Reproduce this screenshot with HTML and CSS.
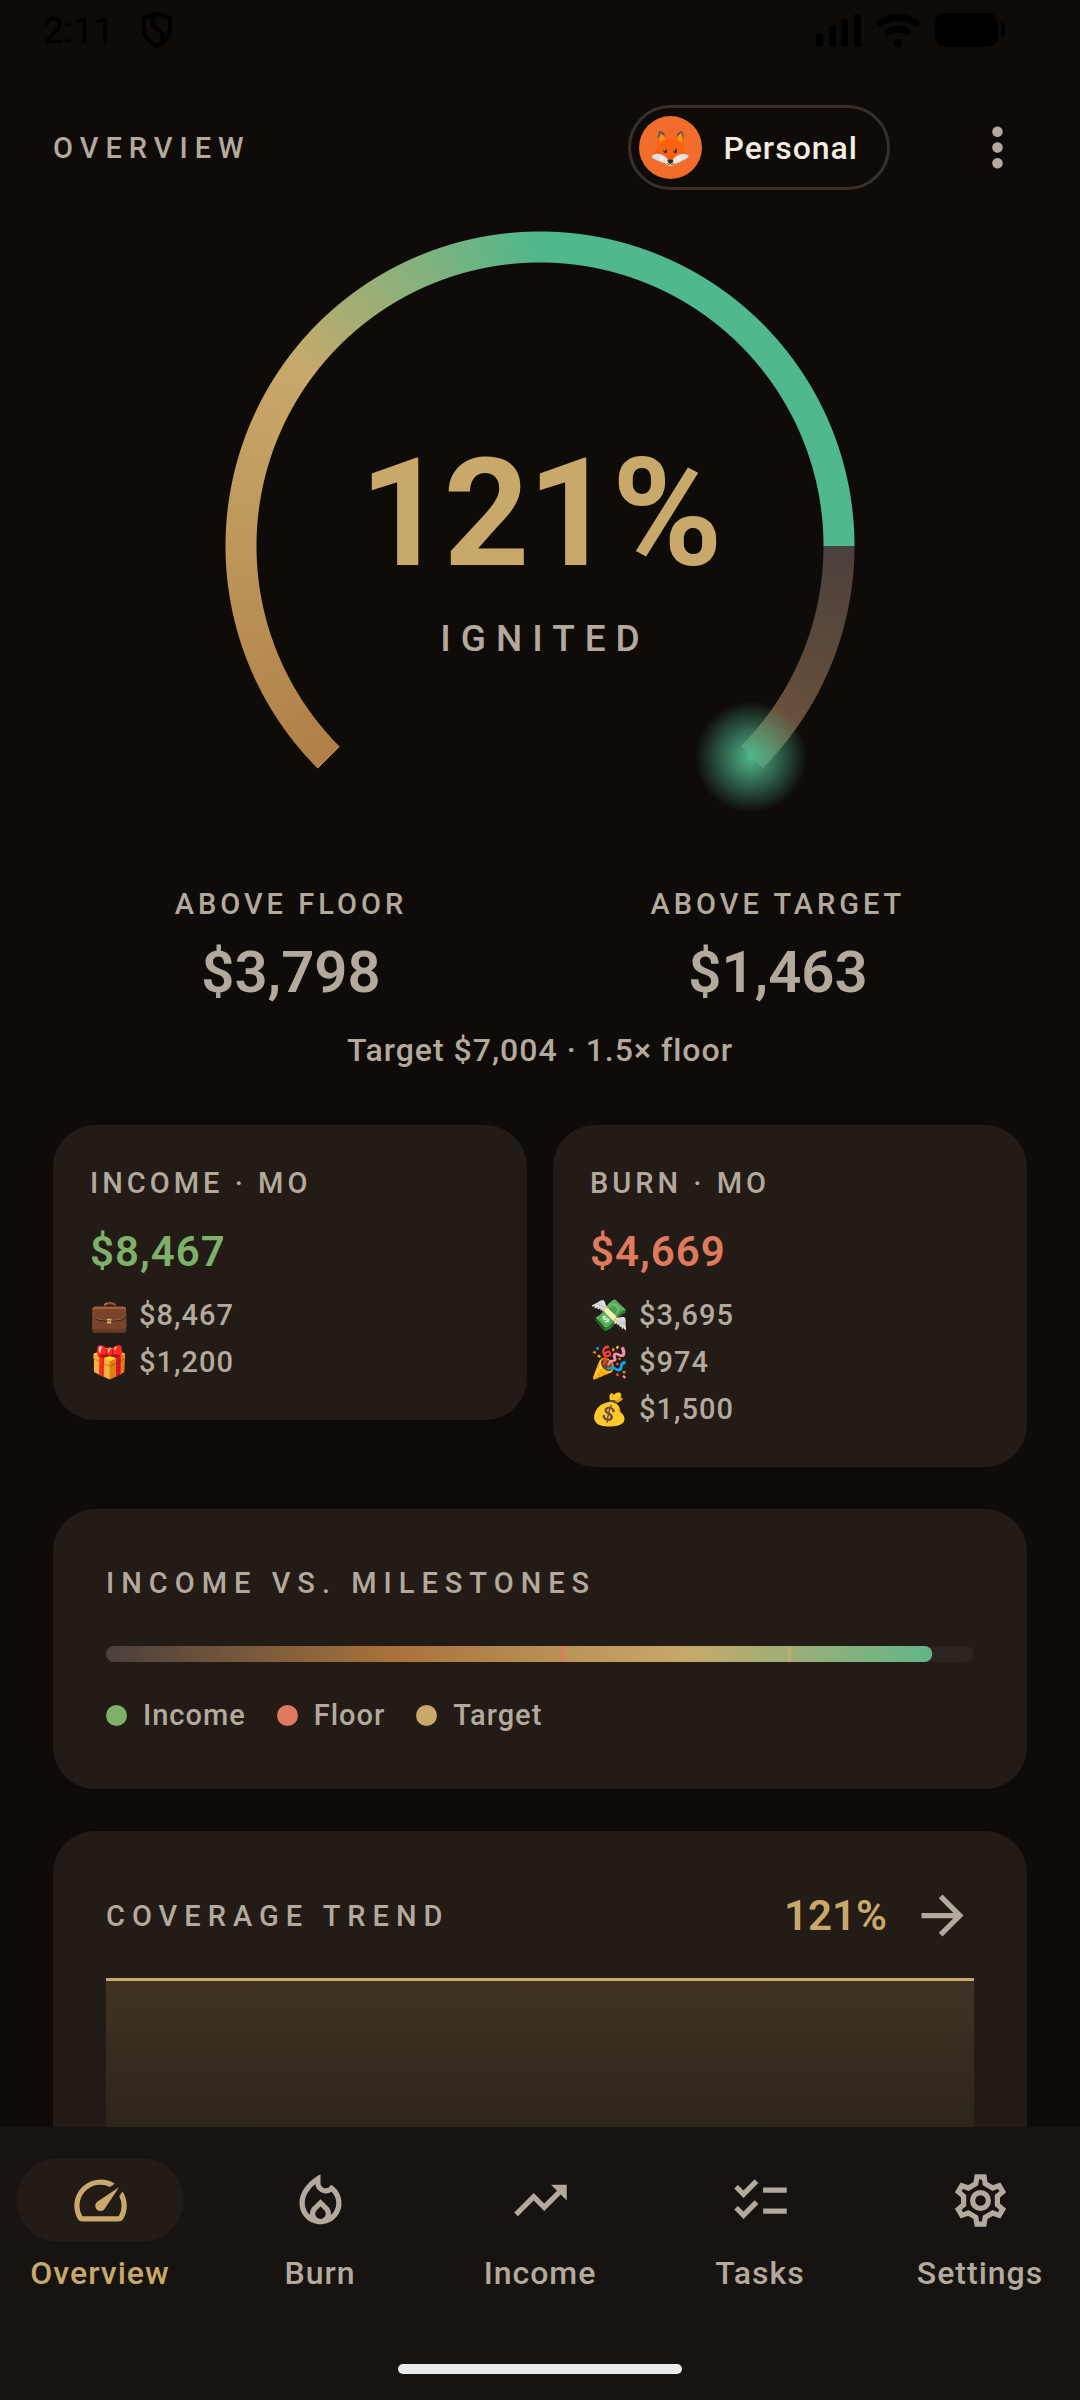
FILE: index.html
```html
<!DOCTYPE html>
<html lang="en">
<head>
	<meta charset="utf-8">
	<meta name="viewport" content="width=device-width, initial-scale=1">
	<title>Overview</title>
	<link rel="stylesheet" href="styles.css">
</head>
<body>

<div class="statusbar">
	<span class="clock">2:11</span>
	<svg class="shield" viewBox="0 0 30 36" fill="none" stroke="#000" stroke-width="4" stroke-linejoin="round">
		<path d="M15 2 L28 6 V17 C28 25 22 31 15 34 C8 31 2 25 2 17 V6 Z"/>
		<path d="M13 3 C9 9 9 14 15 17 C21 20 22 23 20 29"/>
	</svg>
	<svg class="signal" viewBox="0 0 45 34">
		<rect x="0" y="20" width="7" height="14" rx="3"/>
		<rect x="13" y="13" width="7" height="21" rx="3"/>
		<rect x="25" y="6" width="7" height="28" rx="3"/>
		<rect x="38" y="1" width="7" height="33" rx="3"/>
	</svg>
	<svg class="wifi" viewBox="0 0 44 34" fill="none" stroke="#000" stroke-width="7" stroke-linecap="round">
		<path d="M4 10 Q22 -1 40 10"/>
		<path d="M12 19 Q22 13 31 19"/>
		<circle cx="22" cy="30" r="4" fill="#000" stroke="none"/>
	</svg>
	<svg class="battery" viewBox="0 0 70 34">
		<rect width="63" height="34" rx="10"/>
		<path d="M66 9 Q70 10 70 14 V20 Q70 24 66 25 Z"/>
	</svg>
</div>

<header class="topbar">
	<h1 class="eyebrow wide">OVERVIEW</h1>
	<button class="profile"><span class="avatar">🦊</span>Personal</button>
	<button class="more" aria-label="More options">
		<svg class="icon" viewBox="0 0 24 24"><path d="M12 8c1.1 0 2-.9 2-2s-.9-2-2-2-2 .9-2 2 .9 2 2 2zm0 2c-1.1 0-2 .9-2 2s.9 2 2 2 2-.9 2-2-.9-2-2-2zm0 6c-1.1 0-2 .9-2 2s.9 2 2 2 2-.9 2-2-.9-2-2-2z"/></svg>
	</button>
</header>

<main class="content">
	<section class="gauge">
		<div class="gauge-arc"></div>
		<div class="gauge-glow"></div>
		<div class="gauge-value">121%</div>
		<div class="gauge-label">IGNITED</div>
	</section>

	<section class="margins">
		<div class="margin">
			<div class="eyebrow">ABOVE FLOOR</div>
			<div class="margin-value">$3,798</div>
		</div>
		<div class="margin">
			<div class="eyebrow">ABOVE TARGET</div>
			<div class="margin-value">$1,463</div>
		</div>
	</section>
	<p class="target">Target $7,004 · 1.5× floor</p>

	<section class="flows">
		<div class="card flow">
			<h2 class="eyebrow">INCOME · MO</h2>
			<div class="flow-total income">$8,467</div>
			<ul class="flow-list">
				<li><span class="emoji">💼</span>$8,467</li>
				<li><span class="emoji">🎁</span>$1,200</li>
			</ul>
		</div>
		<div class="card flow">
			<h2 class="eyebrow">BURN · MO</h2>
			<div class="flow-total burn">$4,669</div>
			<ul class="flow-list">
				<li><span class="emoji">💸</span>$3,695</li>
				<li><span class="emoji">🎉</span>$974</li>
				<li><span class="emoji">💰</span>$1,500</li>
			</ul>
		</div>
	</section>

	<section class="card milestones">
		<h2 class="eyebrow wide">INCOME VS. MILESTONES</h2>
		<div class="track">
			<div class="track-fill" style="clip-path: inset(0 4.8% 0 0 round 8px)"></div>
			<div class="tick tick-floor" style="left: 52.4%"></div>
			<div class="tick tick-target" style="left: 78.6%"></div>
		</div>
		<ul class="legend">
			<li><span class="dot dot-income"></span>Income</li>
			<li><span class="dot dot-floor"></span>Floor</li>
			<li><span class="dot dot-target"></span>Target</li>
		</ul>
	</section>

	<section class="card trend">
		<div class="trend-head">
			<h2 class="eyebrow wide">COVERAGE TREND</h2>
			<span class="trend-value">121%</span>
			<svg class="icon" viewBox="0 0 24 24"><path d="M12 4l-1.41 1.41L16.17 11H4v2h12.17l-5.58 5.59L12 20l8-8z"/></svg>
		</div>
		<div class="chart"></div>
	</section>
</main>

<nav class="tabbar">
	<div class="tabs">
		<a class="tab active" href="#overview">
			<span class="tab-icon"><svg class="icon" viewBox="0 0 24 24"><path d="M20.38 8.57l-1.23 1.85a8 8 0 0 1-.22 7.58H5.07A8 8 0 0 1 15.58 6.85l1.85-1.23A10 10 0 0 0 3.35 19a2 2 0 0 0 1.72 1h13.85a2 2 0 0 0 1.74-1 10 10 0 0 0-.27-10.44zm-9.79 6.84a2 2 0 0 0 2.83 0l5.66-8.49-8.49 5.66a2 2 0 0 0 0 2.83z"/></svg></span>
			<span class="tab-label">Overview</span>
		</a>
		<a class="tab" href="#burn">
			<span class="tab-icon"><svg class="icon" viewBox="0 0 24 24"><path d="M16 6l-.44.55C15.14 7.08 14.56 7.3 14 7.3c-1.04 0-2-.78-2-2V2c0 0-8 4-8 11 0 4.42 3.58 8 8 8s8-3.58 8-8C20 10.04 18.39 7.38 16 6zM12 19c-1.1 0-2-.87-2-1.94 0-.51.2-.99.58-1.36l1.42-1.4 1.43 1.4c.37.36.57.84.57 1.36C14 18.13 13.1 19 12 19zM15.96 17.5c.04-.36.22-1.89-1.13-3.22L12 11.5l-2.83 2.78c-1.36 1.34-1.17 2.88-1.13 3.22C6.79 16.4 6 14.79 6 13c0-3.16 2.13-5.65 4.03-7.25.23 1.99 1.93 3.55 3.99 3.55.78 0 1.54-.23 2.18-.66C17.34 9.78 18 11.35 18 13c0 1.79-.79 3.4-2.04 4.5z"/></svg></span>
			<span class="tab-label">Burn</span>
		</a>
		<a class="tab" href="#income">
			<span class="tab-icon"><svg class="icon" viewBox="0 0 24 24"><path d="M16 6l2.29 2.29-4.88 4.88-4-4L2 16.59 3.41 18l6-6 4 4 6.3-6.29L22 12V6z"/></svg></span>
			<span class="tab-label">Income</span>
		</a>
		<a class="tab" href="#tasks">
			<span class="tab-icon"><svg class="icon" viewBox="0 0 24 24"><path d="M22 7h-9v2h9V7zm0 8h-9v2h9v-2zM5.54 11L2 7.46l1.41-1.41 2.12 2.12 4.24-4.24 1.41 1.41L5.54 11zm0 8L2 15.46l1.41-1.41 2.12 2.12 4.24-4.24 1.41 1.41L5.54 19z"/></svg></span>
			<span class="tab-label">Tasks</span>
		</a>
		<a class="tab" href="#settings">
			<span class="tab-icon"><svg class="icon icon-line" viewBox="0 0 24 24"><path d="M10.65 3H13.35L13.8 5.6 16.64 7.24 19.12 6.33 20.47 8.67 18.44 10.36V13.64L20.47 15.33 19.12 17.67 16.64 16.76 13.8 18.4 13.35 21H10.65L10.2 18.4 7.36 16.76 4.88 17.67 3.53 15.33 5.56 13.64V10.36L3.53 8.67 4.88 6.33 7.36 7.24 10.2 5.6Z"/><circle cx="12" cy="12" r="3"/></svg></span>
			<span class="tab-label">Settings</span>
		</a>
	</div>
	<div class="home-indicator"></div>
</nav>

</body>
</html>
```
FILE: styles.css
```css
:root {
	--bg: #0f0b08;
	--card: #231b16;
	--muted: #b3a99c;
	--gold: #c8a96a;
	--green: #4fb88c;
	--income: #7fb069;
	--floor: #e07a5f;
}

* { box-sizing: border-box; }

body {
	margin: 0;
	height: 100vh;
	display: flex;
	flex-direction: column;
	overflow: hidden;
	background: var(--bg);
	color: var(--muted);
	font-family: Roboto, "Noto Color Emoji", sans-serif;
	font-weight: 500;
}
h1, h2, p, ul {
	margin: 0;
	padding: 0;
	font: inherit;
}
ul { list-style: none; }
button {
	border: 0;
	background: none;
	color: inherit;
	font: inherit;
	padding: 0;
}
.icon {
	display: block;
	width: 63px;
	height: 63px;
	fill: currentColor;
}
.icon-line {
	fill: none;
	stroke: currentColor;
	stroke-width: 2;
}

.eyebrow {
	font-size: 29px;
	line-height: 42px;
	font-weight: 500;
	letter-spacing: 4px;
}
.eyebrow.wide { letter-spacing: 7px; }

/* --------------- */

.statusbar {
	display: flex;
	align-items: center;
	height: 60px;
	padding: 0 75px 0 43px;
	color: #000;
}
.clock {
	font-size: 37px;
	font-weight: 400;
	margin-right: 28px;
}
.shield { width: 30px; height: 36px; margin-right: auto; }
.signal { width: 45px; height: 34px; }
.wifi { width: 44px; height: 34px; margin: 0 15px; }
.battery { width: 70px; height: 34px; }

.topbar {
	display: flex;
	align-items: center;
	height: 171px;
	padding: 4px 20px 0 53px;
}
.topbar h1 { flex: 1; }
.profile {
	display: flex;
	align-items: center;
	gap: 21px;
	height: 85px;
	padding: 0 29px 0 8px;
	border: 3px solid #3a3028;
	border-radius: 43px;
	color: #f5ede0;
	font-size: 32px;
	letter-spacing: 1px;
}
.avatar {
	display: flex;
	align-items: center;
	justify-content: center;
	width: 63px;
	height: 63px;
	border-radius: 50%;
	background: #f26d2b;
	font-size: 34px;
	letter-spacing: 0;
}
.more {
	display: flex;
	align-items: center;
	justify-content: center;
	width: 126px;
	height: 126px;
	margin-left: 44px;
}

/* --------------- */

.content {
	flex: 1;
	min-height: 0;
	overflow: hidden;
	padding: 0 53px;
}

.gauge {
	position: relative;
	width: 630px;
	height: 630px;
	margin: 0 auto;
	display: flex;
	flex-direction: column;
	align-items: center;
	padding-top: 208px;
}
.gauge-arc {
	position: absolute;
	inset: 0;
	background: conic-gradient(from 90deg, #4a403c 0, #a8723a 30%, var(--gold) 60%, var(--green) 75%);
	-webkit-mask: radial-gradient(circle, transparent 283px, #000 284px, #000 314px, transparent 315px),
		conic-gradient(from 225deg, #000 75%, transparent 75%);
	-webkit-mask-composite: source-in;
	mask-composite: intersect;
}
.gauge-glow {
	position: absolute;
	width: 112px;
	height: 112px;
	left: 470px;
	top: 470px;
	background: radial-gradient(circle closest-side, var(--green), transparent);
}
.gauge-value {
	position: relative;
	font-size: 150px;
	line-height: 150px;
	font-weight: 700;
	letter-spacing: -2px;
	color: var(--gold);
}
/* left padding evens out the tracking after the last letter */
.gauge-label {
	position: relative;
	margin-top: 24px;
	padding-left: 10px;
	font-size: 37px;
	line-height: 52px;
	letter-spacing: 10px;
}

.margins {
	display: flex;
	justify-content: space-around;
	margin-top: 22px;
	text-align: center;
}
.margin-value {
	font-size: 58px;
	line-height: 74px;
	font-weight: 600;
	margin-top: 10px;
}
.target {
	margin-top: 20px;
	font-size: 32px;
	line-height: 42px;
	letter-spacing: 1px;
	text-align: center;
}

/* --------------- */

.card {
	background: var(--card);
	border-radius: 42px;
}
.flows {
	display: grid;
	grid-template-columns: 1fr 1fr;
	align-items: start;
	gap: 26px;
	margin-top: 54px;
}
.flow {
	padding: 37px 37px 34px;
}
.flow-total {
	margin: 16px 0 9px;
	font-size: 42px;
	line-height: 63px;
	font-weight: 600;
	letter-spacing: 1px;
}
.flow-total.income { color: var(--income); }
.flow-total.burn { color: var(--floor); }
.flow-list {
	font-size: 29px;
	line-height: 47px;
}
.flow-list li {
	display: flex;
	gap: 11px;
	height: 47px;
	letter-spacing: 1px;
}
.emoji {
	width: 38px;
	font-size: 31px;
	letter-spacing: 0;
}

.milestones {
	margin-top: 42px;
	padding: 53px;
}
.track {
	position: relative;
	height: 16px;
	margin: 42px 0 32px;
	border-radius: 8px;
	background: #2d2420;
}
.track-fill {
	height: 100%;
	background: linear-gradient(90deg, #4a403c, #a8723a 33%, var(--gold) 67%, var(--green));
}
.tick {
	position: absolute;
	top: 0;
	width: 3px;
	height: 100%;
}
.tick-floor { background: var(--floor); }
.tick-target { background: var(--gold); }
.legend {
	display: flex;
	gap: 31px;
	font-size: 29px;
	line-height: 42px;
	letter-spacing: 1px;
}
.legend li {
	display: flex;
	align-items: center;
	gap: 16px;
}
.dot {
	width: 21px;
	height: 21px;
	border-radius: 50%;
}
.dot-income { background: var(--income); }
.dot-floor { background: var(--floor); }
.dot-target { background: var(--gold); }

.trend {
	margin-top: 42px;
	padding: 53px;
}
.trend-head {
	display: flex;
	align-items: center;
	gap: 24px;
}
.trend-head h2 { flex: 1; }
.trend-value {
	font-size: 42px;
	font-weight: 600;
	color: var(--gold);
}
.chart {
	height: 240px;
	margin-top: 31px;
	border-top: 3px solid var(--gold);
	background: linear-gradient(#403325, #231c15);
}

/* --------------- */

.tabbar {
	height: 273px;
	padding: 31px 16px 26px;
	background: #171310;
	display: flex;
	flex-direction: column;
	justify-content: space-between;
	align-items: center;
}
.tabs {
	display: flex;
	justify-content: space-between;
	width: 100%;
}
.tab {
	width: 168px;
	color: inherit;
	text-decoration: none;
	text-align: center;
}
.tab-icon {
	display: flex;
	align-items: center;
	justify-content: center;
	height: 84px;
	border-radius: 42px;
}
.tab.active { color: var(--gold); }
.tab.active .tab-icon { background: var(--card); }
.tab-label {
	display: block;
	margin-top: 10px;
	font-size: 32px;
	line-height: 42px;
	letter-spacing: 1px;
}
.home-indicator {
	width: 284px;
	height: 10px;
	border-radius: 5px;
	background: #ebebeb;
}
```
